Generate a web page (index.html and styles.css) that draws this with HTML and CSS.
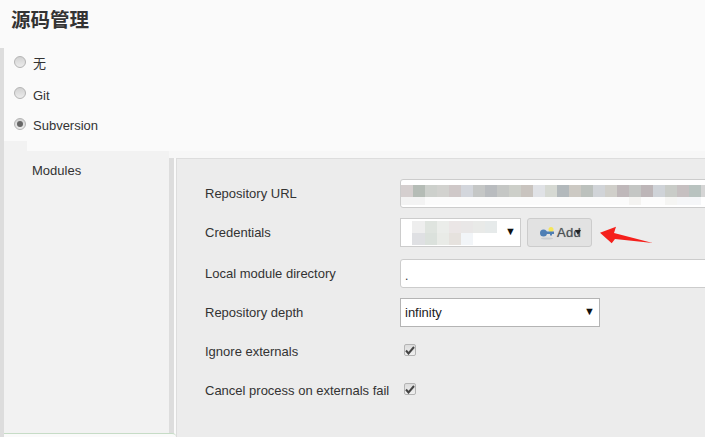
FILE: index.html
```html
<!DOCTYPE html>
<html lang="zh-CN">
<head>
    <meta charset="UTF-8">
    <meta name="viewport" content="width=device-width, initial-scale=1.0">
    <title>源码管理</title>
    <link rel="stylesheet" href="styles.css">
</head>
<body>
    <h1 class="title">源码管理</h1>

    <div class="section">
        <div class="radio-row"><span class="radio"></span><span class="radio-cjk">无</span></div>
        <div class="radio-row"><span class="radio"></span><span>Git</span></div>
        <div class="radio-row"><span class="radio checked"></span><span>Subversion</span></div>

        <div class="subpanel">
            <div class="sidebar">
                <div class="sidebar-label">Modules</div>
                <div class="sidebar-foot"></div>
            </div>
            <div class="divider"></div>

            <div class="form">
                <div class="row row-url">
                    <label>Repository URL</label>
                    <div class="field field-wide"><div class="mosaic mosaic-url"></div></div>
                </div>
                <div class="row row-cred">
                    <label>Credentials</label>
                    <div class="select select-cred">
                        <div class="mosaic mosaic-cred"></div>
                        <span class="arrow">▼</span>
                    </div>
                    <button class="add-btn">
                        <svg class="key" width="16" height="14" viewBox="0 0 16 14">
                            <ellipse cx="8" cy="12.500" rx="6" ry="1" fill="#c9ccd0"/>
                            <circle cx="12" cy="3.500" r="2.500" fill="#f5e65a"/>
                            <circle cx="4.500" cy="7" r="3.500" fill="#4f7fb5"/>
                            <path d="M6 5.500h9v2.500h-2v1.500h-2v-1.500h-5z" fill="#4f7fb5"/>
                        </svg>
                        <span class="add-text">Add</span>
                        <span class="add-caret"></span>
                    </button>
                </div>
                <div class="row row-module">
                    <label>Local module directory</label>
                    <div class="field field-wide field-text">.</div>
                </div>
                <div class="row row-depth">
                    <label>Repository depth</label>
                    <div class="select select-depth">
                        <span>infinity</span>
                        <span class="arrow">▼</span>
                    </div>
                </div>
                <div class="row row-check">
                    <label>Ignore externals</label>
                    <span class="check">
                        <svg width="10" height="9" viewBox="0 0 10 9"><path d="M1 4.500l2.500 3 5.500-6.500" fill="none" stroke="#444" stroke-width="2"/></svg>
                    </span>
                </div>
                <div class="row row-check">
                    <label>Cancel process on externals fail</label>
                    <span class="check">
                        <svg width="10" height="9" viewBox="0 0 10 9"><path d="M1 4.500l2.500 3 5.500-6.500" fill="none" stroke="#444" stroke-width="2"/></svg>
                    </span>
                </div>
            </div>
        </div>
    </div>

    <!-- red annotation arrow pasted over the screenshot -->
    <svg class="annotation" width="60" height="24" viewBox="0 0 60 24">
        <path d="M0 6.700L16 .7L14 7L52.700 17L15 13L11.700 17.300z" fill="#f5201c"/>
    </svg>
</body>
</html>
```

FILE: styles.css
```css
* {
    box-sizing: border-box;
}
body {
    margin: 0;
    height: 437px;
    overflow: hidden;
    background: #fafafa;
    color: #333;
    font-family: "Liberation Sans", "Noto Sans CJK SC", sans-serif;
    font-size: 13px;
    display: flex;
    flex-direction: column;
}
.title {
    margin: 0;
    height: 48px;
    padding: 7px 0 0 11px;
    font-size: 19.500px;
    line-height: 26px;
    font-weight: bold;
    color: #333;
}
.section {
    flex: 1;
    border-left: 4px solid #ddd;
    padding-top: 1px;
    display: flex;
    flex-direction: column;
    min-height: 0;
}
.radio-row {
    height: 31px;
    display: flex;
    align-items: center;
    gap: 7px;
    padding-left: 10px;
    line-height: 16px;
}
.radio-row:nth-child(3) {
    height: 30px;
}
.radio-cjk {
    margin-top: -2px;
}
.radio {
    width: 12px;
    height: 12px;
    margin-top: -5px;
    border-radius: 50%;
    border: 1px solid #b4b4b4;
    background: linear-gradient(#d2d2d2, #ececec);
    display: flex;
    align-items: center;
    justify-content: center;
}
.radio.checked::after {
    content: "";
    width: 6px;
    height: 6px;
    border-radius: 50%;
    background: #666;
}
.subpanel {
    flex: 1;
    display: flex;
    min-height: 0;
    background: linear-gradient(90deg, #f2f2f2 0 23px, transparent 0) 0 0 / 100% 10px no-repeat,
                linear-gradient(#f7f7f7, #f7f7f7) 0 10px / 100% 7px no-repeat;
}
.sidebar {
    width: 165px;
    margin-top: 10px;
    background: #f2f2f2;
    display: flex;
    flex-direction: column;
}
.sidebar-label {
    padding: 12px 0 0 28px;
    line-height: 16px;
    color: #333;
}
/* start of the next block, it runs in under the divider */
.sidebar-foot {
    margin-top: auto;
    margin-right: -7px;
    height: 4px;
    background: #fafafa;
    border-top: 1px solid #c6dcc6;
    border-top-right-radius: 4px;
    position: relative;
}
.divider {
    width: 5px;
    margin-top: 17px;
    background: #ddd;
}
.form {
    flex: 1;
    margin: 17px 0 0 2px;
    background: #ececec;
    border-left: 1px solid #ddd;
    border-top: 1px solid #ddd;
    padding: 20px 0 0 28px;
    min-width: 0;
}
.row {
    display: flex;
    align-items: center;
}
.row label {
    width: 195px;
    flex: none;
    color: #333;
}
.row-url { height: 29px; margin-bottom: 10px; }
.row-cred { height: 29px; margin-bottom: 12px; }
.row-module { height: 29px; margin-bottom: 10px; }
.row-depth { height: 29px; margin-bottom: 9px; }
.row-check { height: 30px; margin-bottom: 9px; }
.field {
    height: 29px;
    background: #fff;
    border: 1px solid #ccc;
    border-radius: 3px;
    overflow: hidden;
}
.field-wide {
    flex: 1;
    margin-right: -4px;
}
.field-text {
    padding: 8px 4px 0;
    line-height: 16px;
    font-size: 12px;
}
.mosaic {
    filter: blur(0.6px);
}
.mosaic-url {
    height: 20px;
    margin-top: 5px;
    background:
        linear-gradient(90deg, #d5cfcf 0 12px, #b5bcb6 0 24px, #cdd0cc 0 36px, #d2d2cf 0 48px, #cfc8c8 0 60px, #d3d6dc 0 72px, #c5c7c6 0 84px, #b9bcbf 0 96px, #c5c7c5 0 108px, #cdcfc9 0 120px, #c9c4bf 0 132px, #e0e2e6 0 144px, #d6d9d3 0 156px, #b3b9bc 0 168px, #ccc9c3 0 180px, #bcc1bd 0 192px, #d1d4d8 0 204px, #d0cfca 0 216px, #bfb8ba 0 228px, #c4c6c4 0 240px, #bdb6b8 0 252px, #cfd3d8 0 264px, #c9ccc8 0 276px, #c6c0c1 0 288px, #b9c3c0 0 300px, #d5d5d5 0) 0 0 / 100% 12px no-repeat,
        linear-gradient(90deg, #f3f3f3 0 24px, #fbfbfb 0 228px, #f4f3f1 0 240px, #fcfcfc 0 264px, #f5f5f3 0 276px, #f5f6f8 0 300px, #fff 0) 0 100% / 100% 8px no-repeat;
}
.select {
    height: 29px;
    background: #fff;
    border: 1px solid #b4b4b4;
    display: flex;
    align-items: center;
    justify-content: space-between;
    padding: 0 4px;
    color: #222;
    font-size: 13px;
}
.select-cred {
    width: 121px;
    border-color: #ccc;
    padding-left: 0;
}
.select-depth {
    width: 200px;
}
.mosaic-cred {
    width: 96px;
    height: 24px;
    background:
        linear-gradient(90deg, #fff 0 11px, #eeeeee 0 24px, #dfe4df 0 36px, #ebedea 0 48px, #ebe6e6 0 60px, #e9e7e7 0 72px, #e9eae8 0 84px, #e6eaea 0 96px) 0 0 / 100% 12px no-repeat,
        linear-gradient(90deg, #fff 0 11px, #dfe0e3 0 24px, #dbe1dc 0 36px, #e9ebe7 0 48px, #e6e2de 0 60px, #f2f5f8 0 72px, #fff 0) 0 100% / 100% 12px no-repeat;
}
.arrow {
    font-size: 11px;
    color: #111;
    line-height: 1;
    margin-top: -3px;
}
.add-btn {
    width: 65px;
    height: 29px;
    margin-left: 6px;
    padding: 0 0 0 11px;
    display: flex;
    align-items: center;
    gap: 2px;
    background: #e2e2e2;
    border: 1px solid #ccc;
    border-radius: 3px;
    color: #4a4f55;
    font-family: inherit;
    font-size: 13px;
    letter-spacing: 0.3px;
    text-shadow: 0 0 1px #888;
    position: relative;
}
/* menu caret sits on top of the last letter */
.add-caret {
    position: absolute;
    left: 47px;
    top: 11px;
    width: 0;
    height: 0;
    border-left: 3px solid transparent;
    border-right: 3px solid transparent;
    border-top: 5px solid #222;
}
.check {
    width: 12px;
    height: 12px;
    margin-top: -2px;
    margin-left: 4px;
    border: 1px solid #b4b4b4;
    border-radius: 2px;
    background: linear-gradient(#dcdcdc, #f0f0f0);
    display: flex;
    align-items: center;
    justify-content: center;
}
.annotation {
    position: absolute;
    left: 600px;
    top: 226px;
}
```
